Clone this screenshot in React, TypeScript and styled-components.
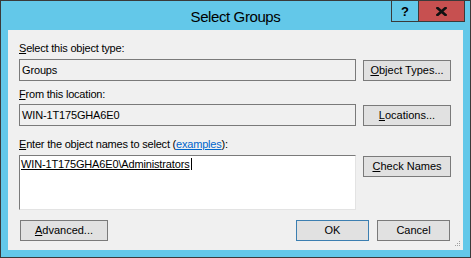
import React from 'react';
import styled, { createGlobalStyle } from 'styled-components';

const GlobalStyle = createGlobalStyle`
  html, body {
    margin: 0;
    padding: 0;
    width: 471px;
    height: 258px;
    overflow: hidden;
    background: #ffffff;
  }
  * {
    box-sizing: border-box;
  }
`;

const Window = styled.div`
  width: 471px;
  height: 258px;
  border: 1px solid #3a3a3a;
  background: #63c8e9;
  display: flex;
  flex-direction: column;
  padding: 0 7px 7px 7px;
  font-family: "Liberation Sans", Arial, sans-serif;
  font-size: 11px;
  color: #000;
`;

const TitleBar = styled.div`
  height: 29px;
  margin: 0 -7px;
  display: grid;
  grid-template-columns: 1fr auto 1fr;
  align-items: start;
`;

const Title = styled.div`
  grid-column: 2;
  font-size: 15px;
  letter-spacing: -0.4px;
  line-height: 29px;
  padding-top: 1px;
  color: #000;
`;

const CaptionGroup = styled.div`
  grid-column: 3;
  justify-self: end;
  margin-right: 5px;
  display: flex;
  border: 1px solid #3a3a3a;
  border-top: none;
  height: 21px;
`;

const CaptionButton = styled.div<{ $close?: boolean }>`
  width: ${p => (p.$close ? 45 : 27)}px;
  height: 20px;
  background: ${p => (p.$close ? '#c75050' : 'transparent')};
  border-right: ${p => (p.$close ? 'none' : '1px solid #3a3a3a')};
  display: flex;
  align-items: center;
  justify-content: center;
  font-weight: bold;
  font-size: 13px;
  color: #000;
`;

const Client = styled.div`
  flex: 1;
  position: relative;
  background: #f0f0f0;
  padding: 12px 12px 9px 11px;
  display: flex;
  flex-direction: column;
`;

const Label = styled.div<{ $gap: number }>`
  margin-top: ${p => p.$gap}px;
  line-height: 13px;
  height: 13px;
  letter-spacing: -0.2px;
  white-space: nowrap;
`;

const Link = styled.span`
  color: #0066cc;
  text-decoration: underline;
`;

const Row = styled.div<{ $gap: number }>`
  margin-top: ${p => p.$gap}px;
  display: grid;
  grid-template-columns: 337px 88px;
  column-gap: 7px;
  align-items: start;
`;

const ReadOnlyBox = styled.div`
  height: 22px;
  border: 1px solid #7a7a7a;
  background: #f0f0f0;
  line-height: 20px;
  padding-left: 2px;
  letter-spacing: -0.15px;
  white-space: nowrap;
`;

const NamesBox = styled.div`
  height: 55px;
  background: #ffffff;
  border-top: 1px solid #7a7a7a;
  border-left: 1px solid #7a7a7a;
  border-bottom: 1px solid #e3e3e3;
  border-right: 1px solid #e3e3e3;
  padding: 2px 0 0 1px;
  line-height: 13px;
  letter-spacing: -0.15px;
  white-space: nowrap;
`;

const ResolvedName = styled.span`
  text-decoration: underline;
  border-right: 1px solid #000;
  padding-right: 1px;
`;

const Button = styled.div<{ $width: number; $default?: boolean; $flush?: boolean }>`
  width: ${p => p.$width}px;
  height: 21px;
  margin-top: ${p => (p.$flush ? 0 : 1)}px;
  background: #e1e1e1;
  border: 1px solid ${p => (p.$default ? '#3c7fb1' : '#7a7a7a')};
  display: flex;
  align-items: center;
  justify-content: center;
  line-height: 13px;
  white-space: nowrap;
`;

const Footer = styled.div`
  margin-top: 10px;
  display: flex;
  align-items: center;
  padding-left: 1px;
`;

const Spacer = styled.div`
  flex: 1;
`;

const FooterButtons = styled.div`
  display: flex;
  gap: 8px;
  margin-right: 1px;
`;

const Grip = styled.svg`
  position: absolute;
  right: 3px;
  bottom: 4px;
`;

const App: React.FC = () => {
  return (
    <>
      <GlobalStyle />
      <Window>
        <TitleBar>
          <Title>Select Groups</Title>
          <CaptionGroup>
            <CaptionButton>?</CaptionButton>
            <CaptionButton $close>
              <svg width="11" height="9" viewBox="0 0 11 9">
                <path d="M1.5 1 L9.5 8 M9.5 1 L1.5 8" stroke="#111" strokeWidth="2.6" strokeLinecap="square" />
              </svg>
            </CaptionButton>
          </CaptionGroup>
        </TitleBar>
        <Client>
          <Label $gap={0}><u>S</u>elect this object type:</Label>
          <Row $gap={4}>
            <ReadOnlyBox>Groups</ReadOnlyBox>
            <Button $width={88}><u>O</u>bject Types...</Button>
          </Row>
          <Label $gap={7}><u>F</u>rom this location:</Label>
          <Row $gap={3}>
            <ReadOnlyBox>WIN-1T175GHA6E0</ReadOnlyBox>
            <Button $width={88}><u>L</u>ocations...</Button>
          </Row>
          <Label $gap={12}>
            <u>E</u>nter the object names to select (<Link>examples</Link>):
          </Label>
          <Row $gap={4}>
            <NamesBox>
              <ResolvedName>WIN-1T175GHA6E0\Administrators</ResolvedName>
            </NamesBox>
            <Button $width={88}><u>C</u>heck Names</Button>
          </Row>
          <Footer>
            <Button $width={88} $flush><u>A</u>dvanced...</Button>
            <Spacer />
            <FooterButtons>
              <Button $width={73} $default $flush>OK</Button>
              <Button $width={73} $flush>Cancel</Button>
            </FooterButtons>
          </Footer>
          <Grip width="7" height="5" viewBox="0 0 7 5">
            <rect x="6" y="0" width="1" height="1" fill="#a0a0a0" />
            <rect x="4" y="2" width="1" height="1" fill="#a0a0a0" />
            <rect x="6" y="2" width="1" height="1" fill="#a0a0a0" />
            <rect x="2" y="4" width="1" height="1" fill="#a0a0a0" />
            <rect x="4" y="4" width="1" height="1" fill="#a0a0a0" />
            <rect x="6" y="4" width="1" height="1" fill="#a0a0a0" />
          </Grip>
        </Client>
      </Window>
    </>
  );
};

export default App;
